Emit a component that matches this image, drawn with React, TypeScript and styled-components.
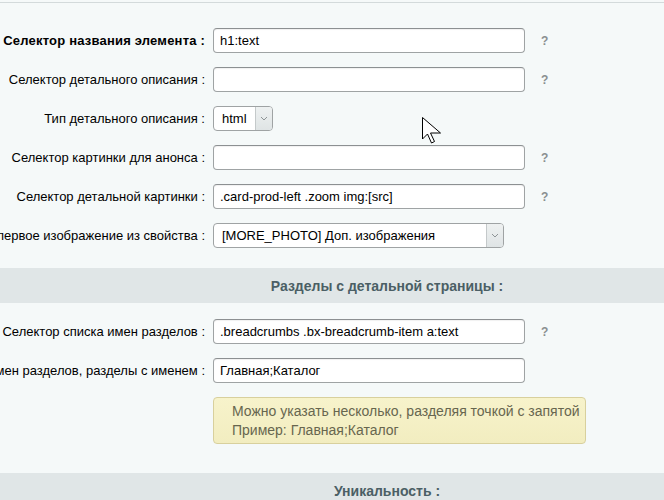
import React from "react";
import styled, { createGlobalStyle } from "styled-components";

const Global = createGlobalStyle`
  html, body {
    margin: 0;
    padding: 0;
    background: #f5f9f9;
    overflow: hidden;
  }
  body {
    font-family: "Liberation Sans", Arial, sans-serif;
    font-size: 13px;
    color: #000;
  }
`;

const Page = styled.div`
  position: relative;
  width: 664px;
  height: 500px;
  overflow: hidden;
  background: #f5f9f9;
  padding-top: 2px;
  box-sizing: border-box;
`;

const Form = styled.div`
  border-top: 1px solid #d3dadb;
  padding-top: 18px;
`;

const Row = styled.div`
  display: grid;
  grid-template-columns: 205px 8px auto 1fr;
  align-items: center;
  height: 39px;
`;

const Label = styled.div<{ $bold?: boolean }>`
  display: flex;
  justify-content: flex-end;
  white-space: nowrap;
  overflow: visible;
  font-weight: ${(p) => (p.$bold ? "bold" : "normal")};
  letter-spacing: ${(p) => (p.$bold ? "0.2px" : "0")};
  color: #000;
`;

const Field = styled.div`
  grid-column: 3;
  display: flex;
  align-items: center;
`;

const TextInput = styled.div`
  box-sizing: border-box;
  width: 312px;
  height: 25px;
  border: 1px solid #9fa3a4;
  border-top-color: #8c9092;
  border-radius: 4px;
  background: #fff;
  box-shadow: inset 0 1px 1px rgba(0, 0, 0, 0.06);
  padding: 0 6px;
  display: flex;
  align-items: center;
  white-space: nowrap;
  overflow: hidden;
  color: #000;
`;

const Select = styled.div<{ $width: number }>`
  box-sizing: border-box;
  width: ${(p) => p.$width}px;
  height: 25px;
  border: 1px solid #9fa3a4;
  border-radius: 4px;
  background: #fff;
  display: flex;
  align-items: stretch;
  overflow: hidden;
`;

const SelectValue = styled.div`
  flex: 1;
  display: flex;
  align-items: center;
  padding: 0 8px;
  white-space: nowrap;
`;

const SelectArrow = styled.div`
  width: 16px;
  border-left: 1px solid #c4c9ca;
  background: linear-gradient(#eef1f1, #dfe4e5);
  display: flex;
  align-items: center;
  justify-content: center;
`;

const Help = styled.div`
  grid-column: 4;
  padding-left: 16px;
  font-weight: bold;
  color: #8a8f91;
  font-size: 12px;
`;

const Band = styled.div<{ $mt: number; $mb: number }>`
  height: 35px;
  margin-top: ${(p) => p.$mt}px;
  margin-bottom: ${(p) => p.$mb}px;
  background: #e0e6e7;
  display: flex;
  align-items: center;
  justify-content: center;
  padding-left: 110px;
  font-weight: bold;
  font-size: 14px;
  color: #4b5f65;
`;

const HintRow = styled.div`
  display: grid;
  grid-template-columns: 205px 8px auto;
  padding: 7px 0;
`;

const Hint = styled.div`
  grid-column: 3;
  box-sizing: border-box;
  width: 373px;
  height: 47px;
  border: 1px solid #d8d09d;
  border-radius: 4px;
  background: linear-gradient(#f7f3cb, #f2edc0);
  padding: 4px 18px;
  color: #67664f;
  line-height: 19px;
  font-size: 14px;
  white-space: nowrap;
`;

const Cursor = styled.svg`
  position: absolute;
  left: 421px;
  top: 116px;
`;

const Chevron = () => (
  <svg width="8" height="5" viewBox="0 0 8 5">
    <path d="M1 1 L4 4 L7 1" fill="none" stroke="#8e9496" strokeWidth="1" />
  </svg>
);

type RowDef = {
  label: string;
  bold?: boolean;
  value?: string;
  select?: { value: string; width: number };
  help?: boolean;
};

const topRows: RowDef[] = [
  { label: "Селектор названия элемента :", bold: true, value: "h1:text", help: true },
  { label: "Селектор детального описания :", value: "", help: true },
  { label: "Тип детального описания :", select: { value: "html", width: 60 } },
  { label: "Селектор картинки для анонса :", value: "", help: true },
  { label: "Селектор детальной картинки :", value: ".card-prod-left .zoom img:[src]", help: true },
  {
    label: "Брать первое изображение из свойства :",
    select: { value: "[MORE_PHOTO] Доп. изображения", width: 291 },
  },
];

const sectionRows: RowDef[] = [
  {
    label: "Селектор списка имен разделов :",
    value: ".breadcrumbs .bx-breadcrumb-item a:text",
    help: true,
  },
  { label: "Учитывать список имен разделов, разделы с именем :", value: "Главная;Каталог" },
];

const FormRow = ({ row }: { row: RowDef }) => (
  <Row>
    <Label $bold={row.bold}>{row.label}</Label>
    <Field>
      {row.select ? (
        <Select $width={row.select.width}>
          <SelectValue>{row.select.value}</SelectValue>
          <SelectArrow>
            <Chevron />
          </SelectArrow>
        </Select>
      ) : (
        <TextInput>{row.value}</TextInput>
      )}
    </Field>
    {row.help && <Help>?</Help>}
  </Row>
);

export default function App() {
  return (
    <>
      <Global />
      <Page>
        <Form>
          {topRows.map((r) => (
            <FormRow key={r.label} row={r} />
          ))}
          <Band $mt={13} $mb={9}>Разделы с детальной страницы :</Band>
          {sectionRows.map((r) => (
            <FormRow key={r.label} row={r} />
          ))}
          <HintRow>
            <Hint>
              Можно указать несколько, разделяя точкой с запятой
              <br />
              Пример: Главная;Каталог
            </Hint>
          </HintRow>
          <Band $mt={22} $mb={0}>Уникальность :</Band>
        </Form>
        <Cursor width="21" height="28" viewBox="0 0 21 28">
          <path
            d="M1.5 1.5 L1.5 23 L6.5 18 L10.5 27 L13.5 25.5 L9.5 17 L19.5 17 Z"
            fill="#fff"
            stroke="#000"
            strokeWidth="1"
            strokeLinejoin="miter"
          />
        </Cursor>
      </Page>
    </>
  );
}
